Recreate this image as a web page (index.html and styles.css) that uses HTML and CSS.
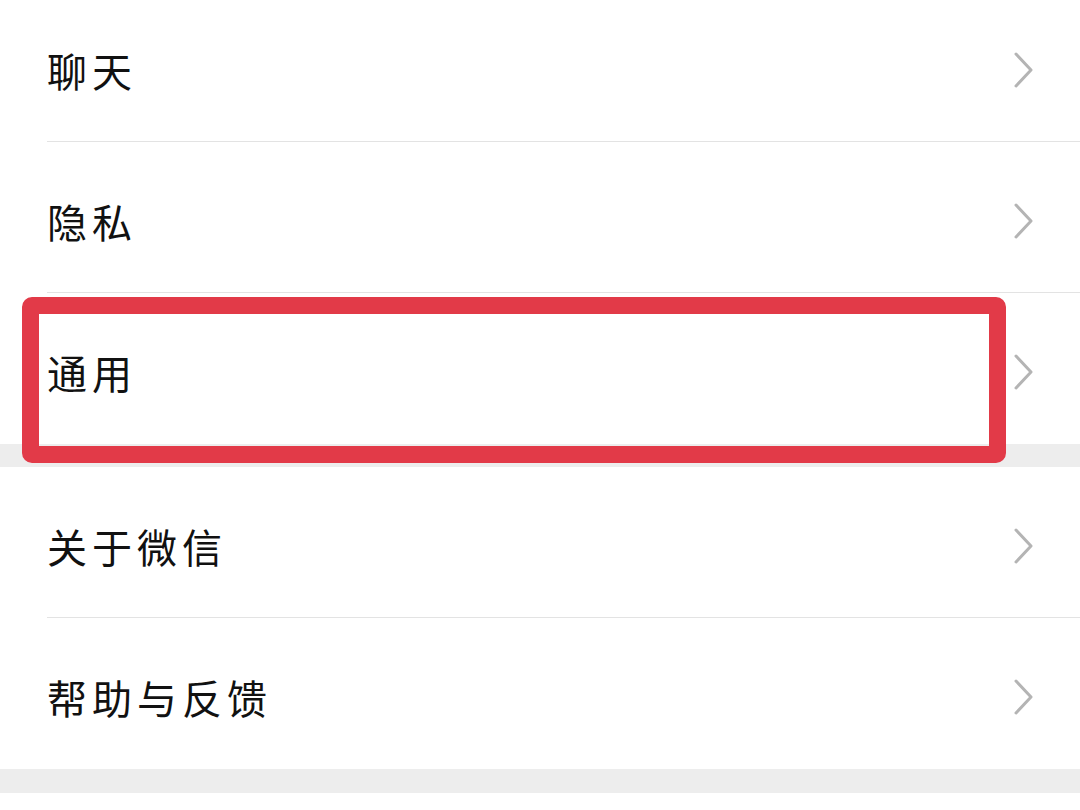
FILE: index.html
```
<!DOCTYPE html>
<html lang="zh-CN">
<head>
  <meta charset="UTF-8">
  <title>设置</title>
  <link rel="stylesheet" href="styles.css">
</head>
<body>

  <div class="group first">
    <div class="cell">
      <span class="label">聊天</span>
      <svg class="arrow" viewBox="0 0 22 38"><polyline points="3,3 18,19 3,35"/></svg>
    </div>
    <div class="cell">
      <span class="label">隐私</span>
      <svg class="arrow" viewBox="0 0 22 38"><polyline points="3,3 18,19 3,35"/></svg>
    </div>
    <div class="cell last marked">
      <span class="label">通用</span>
      <svg class="arrow" viewBox="0 0 22 38"><polyline points="3,3 18,19 3,35"/></svg>
      <div class="mark"></div>
    </div>
  </div>

  <div class="gap"></div>

  <div class="group">
    <div class="cell">
      <span class="label">关于微信</span>
      <svg class="arrow" viewBox="0 0 22 38"><polyline points="3,3 18,19 3,35"/></svg>
    </div>
    <div class="cell last">
      <span class="label">帮助与反馈</span>
      <svg class="arrow" viewBox="0 0 22 38"><polyline points="3,3 18,19 3,35"/></svg>
    </div>
  </div>

  <div class="gap bottom"></div>

</body>
</html>
```

FILE: styles.css
```
body {
  margin: 0;
  padding: 0;
  background-color: #fff;
  font-family: "Noto Sans CJK SC", "Noto Sans", sans-serif;
  color: #111;
  overflow: hidden;
}

.group {
  background-color: #fff;
}

.group.first {
  margin-top: -9px;
}

.cell {
  position: relative;
  height: 151px;
  box-sizing: border-box;
  display: flex;
  align-items: center;
  justify-content: space-between;
  padding: 6px 47px 0 47px;
}

.cell::after {
  content: "";
  position: absolute;
  left: 47px;
  right: 0;
  bottom: 0;
  height: 1px;
  background-color: #e3e3e3;
}

.cell.last::after {
  display: none;
}

.label {
  font-size: 40px;
  letter-spacing: 5px;
  line-height: 1;
}

.arrow {
  width: 22px;
  height: 38px;
  margin-right: -2px;
}

.arrow polyline {
  fill: none;
  stroke: #b4b4b4;
  stroke-width: 3;
  stroke-linecap: round;
  stroke-linejoin: round;
}

.gap {
  height: 23px;
  background-color: #ededed;
}

.gap.bottom {
  height: 24px;
}

/* red highlight drawn over the 通用 row */
.mark {
  position: absolute;
  top: 4px;
  left: 22px;
  width: 984px;
  height: 166px;
  box-sizing: border-box;
  border: 17px solid #e23a48;
  border-radius: 10px;
  z-index: 1;
}
```
